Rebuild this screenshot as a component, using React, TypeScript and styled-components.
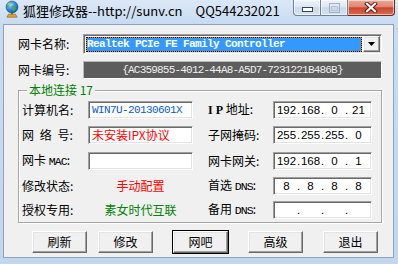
import styled, { createGlobalStyle } from "styled-components";

const GlobalStyle = createGlobalStyle`
  html,
  body {
    margin: 0;
    padding: 0;
  }
  body {
    width: 398px;
    height: 264px;
    overflow: hidden;
    background: #c4d8ef;
    font-family: "Noto Sans CJK SC", "Liberation Sans", sans-serif;
    font-size: 12px;
    color: #000;
  }
`;

const MONO = `"Liberation Mono", "Noto Sans CJK SC", monospace`;

type Ip = [string, string, string, string];

type Row = {
  label: React.ReactNode;
  value: React.ReactNode;
  rightLabel: React.ReactNode;
  ip: Ip;
};

// built lazily so the styled parts below exist by then
const getRows = (): Row[] => [
  {
    label: "计算机名:",
    value: (
      <TextBox $color="#0a5cd0" $mono>
        WIN7U-20130601X
      </TextBox>
    ),
    rightLabel: (
      <>
        <SerifLatin>I P</SerifLatin> 地址:
      </>
    ),
    ip: ["192", "168", "0", "21"],
  },
  {
    label: <Spread>网 络 号:</Spread>,
    value: <TextBox $color="#ff0000">未安装IPX协议</TextBox>,
    rightLabel: "子网掩码:",
    ip: ["255", "255", "255", "0"],
  },
  {
    label: (
      <>
        网卡 <MonoLatin>MAC</MonoLatin>:
      </>
    ),
    value: <TextBox />,
    rightLabel: "网卡网关:",
    ip: ["192", "168", "0", "1"],
  },
  {
    label: "修改状态:",
    value: <Status $color="#ff0000">手动配置</Status>,
    rightLabel: (
      <>
        首选 <MonoLatin>DNS</MonoLatin>:
      </>
    ),
    ip: ["8", "8", "8", "8"],
  },
  {
    label: "授权专用:",
    value: <Status $color="#008000">素女时代互联</Status>,
    rightLabel: (
      <>
        备用 <MonoLatin>DNS</MonoLatin>:
      </>
    ),
    ip: ["", "", "", ""],
  },
];

const buttons = [
  { text: "刷新", gap: 0 },
  { text: "修改", gap: 11 },
  { text: "网吧", gap: 20, isDefault: true },
  { text: "高级", gap: 20 },
  { text: "退出", gap: 20 },
];

function GlobeIcon() {
  return (
    <svg width="16" height="18" viewBox="0 0 16 18">
      <defs>
        <radialGradient id="globe" cx="0.35" cy="0.3" r="0.8">
          <stop offset="0" stopColor="#8fd0ff" />
          <stop offset="0.6" stopColor="#2a7fd8" />
          <stop offset="1" stopColor="#124a9a" />
        </radialGradient>
      </defs>
      <path d="M4.5 14.2h7l1.6 3H2.9z" fill="#e0a828" stroke="#8a5a08" strokeWidth="0.6" />
      <rect x="7" y="12" width="2" height="2.6" fill="#a8740e" />
      <circle cx="8" cy="7" r="6" fill="url(#globe)" stroke="#174f98" strokeWidth="0.6" />
      <path
        d="M4 3.6c1.2-1 3-1.4 4.2-1-.1 1.1-1 1.9-2 2.4S4.2 6.6 3.2 7.4C2.9 6 3.2 4.6 4 3.6zM8.6 6.3c1.5-.3 3 .3 3.5 1.5-.3 1.7-1.4 3-2.8 3.6-.5-1-.3-2-.9-3-.4-.8-.3-1.5.2-2.1z"
        fill="#3fae3a"
      />
      <ellipse cx="6" cy="4.3" rx="2.6" ry="1.4" fill="#fff" opacity="0.4" />
    </svg>
  );
}

function CaptionGlyph({ kind }: { kind: "min" | "max" | "close" }) {
  if (kind === "min") {
    return (
      <svg width="11" height="5" viewBox="0 0 11 5">
        <rect x="0.5" y="0.5" width="10" height="4" fill="#fff" stroke="#2e4563" />
      </svg>
    );
  }
  if (kind === "max") {
    return (
      <svg width="11" height="10" viewBox="0 0 11 10">
        <rect x="0.5" y="0.5" width="10" height="9" fill="none" stroke="#9fb1c8" />
        <rect x="2.5" y="3.5" width="6" height="4" fill="none" stroke="#b4c3d6" />
      </svg>
    );
  }
  return (
    <svg width="14" height="11" viewBox="0 0 14 11">
      <path d="M3 1.8L11 9.2M11 1.8L3 9.2" stroke="#5a1a10" strokeWidth="4" strokeLinecap="square" />
      <path d="M3 1.8L11 9.2M11 1.8L3 9.2" stroke="#fff" strokeWidth="2.2" strokeLinecap="square" />
    </svg>
  );
}

function IpBox({ octets }: { octets: Ip }) {
  return (
    <IpField>
      {octets.map((o, i) => (
        <IpPart key={i}>
          <Octet>{o}</Octet>
          {i < 3 && <Dot>.</Dot>}
        </IpPart>
      ))}
    </IpField>
  );
}

export default function App() {
  const rows = getRows();
  return (
    <>
      <GlobalStyle />
      <Window>
        <TitleBar>
          <GlobeIcon />
          <Title>狐狸修改器--http://sunv.cn</Title>
          <Title $gap={13}>QQ544232021</Title>
          <Captions>
            <CaptionButton $kind="min">
              <CaptionGlyph kind="min" />
            </CaptionButton>
            <CaptionButton $kind="max">
              <CaptionGlyph kind="max" />
            </CaptionButton>
            <CaptionButton $kind="close">
              <CaptionGlyph kind="close" />
            </CaptionButton>
          </Captions>
        </TitleBar>

        <Client>
          <FieldRow>
            <Label>网卡名称:</Label>
            <Combo>
              <ComboSelection>Realtek PCIe FE Family Controller</ComboSelection>
              <ComboArrow>
                <svg width="7" height="4" viewBox="0 0 7 4">
                  <path d="M0 0h7L3.5 4z" fill="#000" />
                </svg>
              </ComboArrow>
            </Combo>
          </FieldRow>

          <FieldRow $top={7}>
            <Label>网卡编号:</Label>
            <GuidBox>{"{AC359855-4012-44A8-A5D7-7231221B486B}"}</GuidBox>
          </FieldRow>

          <Group>
            <Legend>本地连接 17</Legend>
            <Grid>
              {rows.map((row, i) => (
                <GridRow key={i}>
                  <GridLabel>{row.label}</GridLabel>
                  {row.value}
                  <GridLabel $indent={15}>{row.rightLabel}</GridLabel>
                  <IpBox octets={row.ip} />
                </GridRow>
              ))}
            </Grid>
          </Group>

          <ButtonRow>
            {buttons.map((b) => (
              <Button key={b.text} $gap={b.gap} $default={b.isDefault}>
                {b.text}
              </Button>
            ))}
          </ButtonRow>
        </Client>
      </Window>
    </>
  );
}

const Window = styled.div`
  width: 398px;
  height: 264px;
  display: flex;
  flex-direction: column;
  background: linear-gradient(#dbe8f7 0px, #c8dbf1 24px, #c2d6ee 100%);
`;

const TitleBar = styled.div`
  height: 24px;
  flex-shrink: 0;
  display: flex;
  align-items: flex-start;
  padding-left: 4px;
  box-sizing: border-box;
`;

const Title = styled.span<{ $gap?: number }>`
  margin-left: ${(p) => (p.$gap ? p.$gap : 3)}px;
  padding-top: 2px;
  line-height: 17px;
  font-size: 13px;
  white-space: nowrap;
  color: #000;
`;

const Captions = styled.div`
  margin-left: auto;
  margin-right: 3px;
  display: flex;
`;

const CaptionButton = styled.div<{ $kind: "min" | "max" | "close" }>`
  box-sizing: border-box;
  height: 16px;
  width: ${(p) => (p.$kind === "close" ? 47 : p.$kind === "min" ? 28 : 27)}px;
  display: flex;
  justify-content: center;
  align-items: ${(p) => (p.$kind === "min" ? "flex-end" : "center")};
  padding-bottom: ${(p) => (p.$kind === "min" ? 3 : 0)}px;
  border: 1px solid ${(p) => (p.$kind === "close" ? "#6b2a22" : "#6f819b")};
  border-top: none;
  border-left-width: ${(p) => (p.$kind === "min" ? 1 : 0)}px;
  border-radius: ${(p) =>
    p.$kind === "min" ? "0 0 0 4px" : p.$kind === "close" ? "0 0 4px 0" : "0"};
  background: ${(p) =>
    p.$kind === "close"
      ? "linear-gradient(#eba898 0%, #de8670 45%, #cc4630 52%, #db6a50 100%)"
      : "linear-gradient(#eef3fa 0%, #dde7f3 45%, #c9d7e8 52%, #d7e3f1 100%)"};
  box-shadow: inset 0 0 0 1px rgba(255, 255, 255, 0.55);
`;

const Client = styled.div`
  flex: 1;
  margin: 0 4px 6px 3px;
  border: 1px solid #8ca2bd;
  background: #f0f0f0;
  padding: 9px 11px 0 14px;
  display: flex;
  flex-direction: column;
`;

const FieldRow = styled.div<{ $top?: number }>`
  display: flex;
  align-items: center;
  margin-top: ${(p) => p.$top || 0}px;
`;

const Label = styled.span`
  width: 65px;
  flex-shrink: 0;
  white-space: pre;
  line-height: 16px;
`;

const sunken = `
  box-sizing: border-box;
  border: 1px solid;
  border-color: #a0a0a0 #ffffff #ffffff #a0a0a0;
  box-shadow: inset 1px 1px #696969, inset -1px -1px #e3e3e3;
`;

const Combo = styled.div`
  ${sunken}
  flex: 1;
  height: 20px;
  display: flex;
  padding: 2px 1px 1px 2px;
  background: #fff;
`;

const ComboSelection = styled.div`
  flex: 1;
  box-sizing: border-box;
  border: 1px dotted #000;
  background: linear-gradient(#3399ff, #3399ff) padding-box, #f08a00 border-box;
  color: #fff;
  font-family: ${MONO};
  font-weight: bold;
  font-size: 11px;
  letter-spacing: -0.6px;
  line-height: 13px;
  white-space: nowrap;
  overflow: hidden;
`;

const ComboArrow = styled.div`
  width: 17px;
  margin-left: 1px;
  margin-top: -1px;
  box-sizing: border-box;
  border: 1px solid;
  border-color: #ffffff #696969 #696969 #ffffff;
  box-shadow: inset -1px -1px #a0a0a0, inset 1px 1px #e3e3e3;
  background: #f0f0f0;
  display: flex;
  align-items: center;
  justify-content: center;
`;

const GuidBox = styled.div`
  flex: 1;
  height: 18px;
  box-sizing: border-box;
  border: 1px solid;
  border-color: #b9b9b9 #ffffff #ffffff #b9b9b9;
  background: #5d5d5d;
  color: #efefef;
  font-family: ${MONO};
  font-size: 11px;
  letter-spacing: -0.8px;
  line-height: 16px;
  text-align: center;
  white-space: nowrap;
`;

const Group = styled.fieldset`
  margin: 4px 0 0;
  padding: 0 0 0 3px;
  min-width: 0;
  border: 1px solid #a6a6a6;
  box-shadow: 1px 1px 0 #ffffff, inset 1px 1px 0 #ffffff;
`;

const Legend = styled.legend`
  margin-left: 5px;
  padding: 0 2px;
  color: #008000;
  line-height: 14px;
  background: #f0f0f0;
`;

const Grid = styled.div`
  display: grid;
  grid-template-columns: 66px 105px 80px 99px;
  grid-template-rows: 25px 26px 26px 23px 25px;
  align-items: center;
`;

const GridRow = styled.div`
  display: contents;
`;

const GridLabel = styled.span<{ $indent?: number }>`
  padding-left: ${(p) => p.$indent || 0}px;
  white-space: pre;
  line-height: 16px;
`;

const Spread = styled.span`
  word-spacing: 3px;
`;

const SerifLatin = styled.span`
  font-family: "Liberation Serif", serif;
  font-weight: bold;
  font-size: 12px;
`;

const MonoLatin = styled.span`
  font-family: ${MONO};
  font-size: 11.5px;
  letter-spacing: -0.9px;
`;

const TextBox = styled.div<{ $color?: string; $mono?: boolean }>`
  ${sunken}
  height: 18px;
  background: #fff;
  padding-left: 3px;
  color: ${(p) => p.$color || "#000"};
  font-family: ${(p) => (p.$mono ? MONO : "inherit")};
  font-size: ${(p) => (p.$mono ? 11 : 12)}px;
  letter-spacing: ${(p) => (p.$mono ? -0.6 : 0)}px;
  line-height: 16px;
  white-space: nowrap;
  overflow: hidden;
`;

const Status = styled.span<{ $color: string }>`
  color: ${(p) => p.$color};
  text-align: center;
  line-height: 16px;
`;

const IpField = styled.div`
  ${sunken}
  height: 18px;
  background: #fff;
  display: flex;
  padding-left: 2px;
  font-family: "Liberation Sans", sans-serif;
  font-size: 11.5px;
  line-height: 16px;
`;

const IpPart = styled.span`
  display: flex;
`;

const Octet = styled.span`
  width: 21px;
  text-align: center;
`;

const Dot = styled.span`
  width: 3px;
  text-align: center;
`;

const ButtonRow = styled.div`
  display: flex;
  margin-top: 8px;
  padding-left: 14px;
`;

const Button = styled.div<{ $gap: number; $default?: boolean }>`
  width: 55px;
  height: 22px;
  margin-left: ${(p) => p.$gap}px;
  box-sizing: border-box;
  border: 1px solid;
  border-color: #ffffff #696969 #696969 #ffffff;
  box-shadow: inset -1px -1px #a0a0a0, inset 1px 1px #e3e3e3
    ${(p) => (p.$default ? ", 0 0 0 1px #000" : "")};
  background: #f0f0f0;
  display: flex;
  align-items: center;
  justify-content: center;
  line-height: 16px;
`;
